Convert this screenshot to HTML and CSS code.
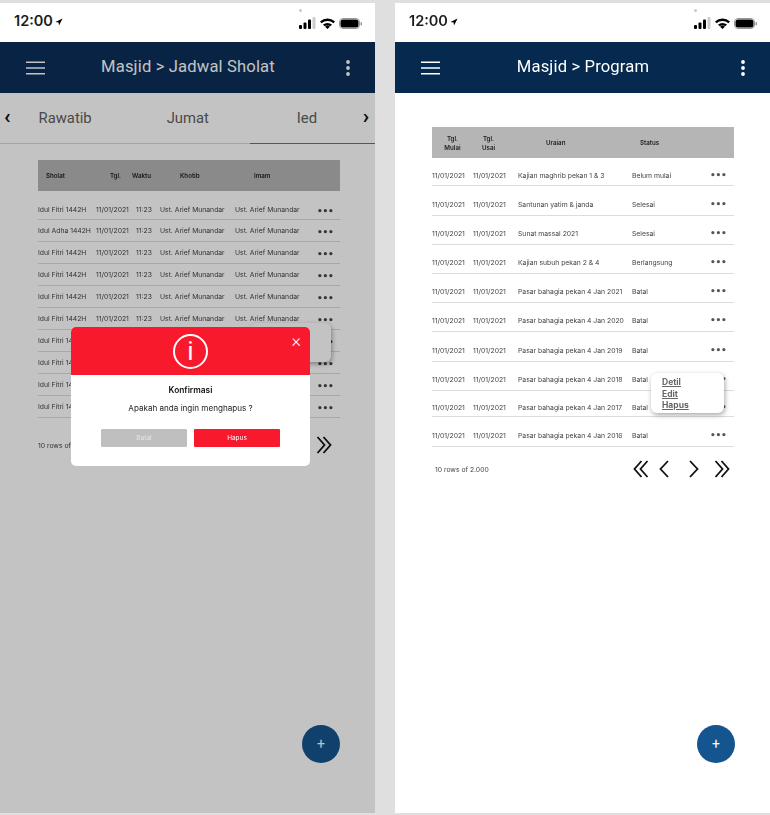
FILE: index.html
```html
<!DOCTYPE html>
<html lang="id">
<head>
    <meta charset="UTF-8">
    <title>Masjid</title>
    <link rel="stylesheet" href="styles.css">
</head>
<body>

    <svg class="defs" width="0" height="0">
        <symbol id="i-first" viewBox="0 0 16 18"><path d="M8.500 1 1.500 9l7 8M14.500 1 7.500 9l7 8" fill="none" stroke="currentColor" stroke-width="1.800"/></symbol>
        <symbol id="i-prev" viewBox="0 0 10 18"><path d="M9 1 1.500 9 9 17" fill="none" stroke="currentColor" stroke-width="1.800"/></symbol>
        <symbol id="i-next" viewBox="0 0 10 18"><path d="M1 1l7.500 8L1 17" fill="none" stroke="currentColor" stroke-width="1.800"/></symbol>
        <symbol id="i-last" viewBox="0 0 16 18"><path d="M1.500 1l7 8-7 8M7.500 1l7 8-7 8" fill="none" stroke="currentColor" stroke-width="1.800"/></symbol>
        <symbol id="i-status" viewBox="0 0 64 14">
            <rect x="0" y="9" width="3" height="4" rx="1"/><rect x="4.500" y="6.500" width="3" height="6.500" rx="1"/><rect x="9" y="3.500" width="3" height="9.500" rx="1"/><rect x="13.500" y="1" width="3" height="12" rx="1" fill="#ccc"/>
            <path d="M21 5.500a11 11 0 0 1 15 0l-1.600 1.700a8.700 8.700 0 0 0-11.800 0zM24 8.600a6.800 6.800 0 0 1 9 0l-1.700 1.700a4.400 4.400 0 0 0-5.600 0zM28.500 13l-2.400-2.300a3.400 3.400 0 0 1 4.800 0z"/>
            <rect x="40.500" y="2.500" width="20" height="10" rx="3.500" stroke="#999" fill="none"/><rect x="41.500" y="3.500" width="18" height="8" rx="2.500"/><rect x="61.500" y="6" width="1.500" height="3.500" rx=".7" fill="#999"/>
        </symbol>
        <symbol id="i-loc" viewBox="0 0 10 10"><path d="M9.500 .5 .5 5l4 .6L5 9.500z"/></symbol>
        <symbol id="i-menu" viewBox="0 0 20 14"><path d="M0 1h20M0 7h20M0 13h20" stroke="currentColor" stroke-width="1.500"/></symbol>
        <symbol id="i-more" viewBox="0 0 4 16"><circle cx="2" cy="2" r="1.900"/><circle cx="2" cy="8" r="1.900"/><circle cx="2" cy="14" r="1.900"/></symbol>
    </svg>

    <div class="page">

        <!-- jadwal sholat -->
        <section class="phone">
            <div class="status">
                <span class="clock">12:00<svg class="loc"><use href="#i-loc"/></svg></span>
                <svg class="status-icons"><use href="#i-status"/></svg>
            </div>
            <span class="cam-dot"></span>
            <header class="appbar appbar-dim">
                <svg class="burger"><use href="#i-menu"/></svg>
                <h1 class="appbar-title">Masjid &gt; Jadwal Sholat</h1>
                <svg class="more"><use href="#i-more"/></svg>
            </header>
            <nav class="tabs">
                <span class="tab-arrow">&#x2039;</span>
                <span class="tab tab-rawatib">Rawatib</span>
                <span class="tab tab-jumat">Jumat</span>
                <span class="tab tab-ied">Ied</span>
                <span class="tab-arrow tab-arrow-right">&#x203A;</span>
            </nav>
            <div class="sholat">
                <div class="thead sholat-row">
                    <span class="h-sholat">Sholat</span><span class="h-tgl">Tgl.</span><span class="h-waktu">Waktu</span><span class="h-khotib">Khotib</span><span class="h-imam">Imam</span><span></span>
                </div>
                <div class="row sholat-row"><span>Idul Fitri 1442H</span><span>11/01/2021</span><span>11:23</span><span>Ust. Arief Munandar</span><span>Ust. Arief Munandar</span><b class="dots">&bull;&bull;&bull;</b></div>
                <div class="row sholat-row"><span>Idul Adha 1442H</span><span>11/01/2021</span><span>11:23</span><span>Ust. Arief Munandar</span><span>Ust. Arief Munandar</span><b class="dots">&bull;&bull;&bull;</b></div>
                <div class="row sholat-row"><span>Idul Fitri 1442H</span><span>11/01/2021</span><span>11:23</span><span>Ust. Arief Munandar</span><span>Ust. Arief Munandar</span><b class="dots">&bull;&bull;&bull;</b></div>
                <div class="row sholat-row"><span>Idul Fitri 1442H</span><span>11/01/2021</span><span>11:23</span><span>Ust. Arief Munandar</span><span>Ust. Arief Munandar</span><b class="dots">&bull;&bull;&bull;</b></div>
                <div class="row sholat-row"><span>Idul Fitri 1442H</span><span>11/01/2021</span><span>11:23</span><span>Ust. Arief Munandar</span><span>Ust. Arief Munandar</span><b class="dots">&bull;&bull;&bull;</b></div>
                <div class="row sholat-row"><span>Idul Fitri 1442H</span><span>11/01/2021</span><span>11:23</span><span>Ust. Arief Munandar</span><span>Ust. Arief Munandar</span><b class="dots">&bull;&bull;&bull;</b></div>
                <div class="row sholat-row"><span>Idul Fitri 1442H</span><span>11/01/2021</span><span>11:23</span><span>Ust. Arief Munandar</span><span>Ust. Arief Munandar</span><b class="dots">&bull;&bull;&bull;</b></div>
                <div class="row sholat-row"><span>Idul Fitri 1442H</span><span>11/01/2021</span><span>11:23</span><span>Ust. Arief Munandar</span><span>Ust. Arief Munandar</span><b class="dots">&bull;&bull;&bull;</b></div>
                <div class="row sholat-row"><span>Idul Fitri 1442H</span><span>11/01/2021</span><span>11:23</span><span>Ust. Arief Munandar</span><span>Ust. Arief Munandar</span><b class="dots">&bull;&bull;&bull;</b></div>
                <div class="row sholat-row"><span>Idul Fitri 1442H</span><span>11/01/2021</span><span>11:23</span><span>Ust. Arief Munandar</span><span>Ust. Arief Munandar</span><b class="dots">&bull;&bull;&bull;</b></div>
                <div class="tfoot">
                    <span>10 rows of 2.000</span>
                    <div class="pager">
                        <svg class="pg-wide"><use href="#i-first"/></svg>
                        <svg class="pg-thin"><use href="#i-prev"/></svg>
                        <svg class="pg-thin"><use href="#i-next"/></svg>
                        <svg class="pg-wide"><use href="#i-last"/></svg>
                    </div>
                </div>
            </div>
            <div class="popup popup-sholat"></div>
            <button class="fab">+</button>

            <div class="overlay"></div>
            <div class="modal">
                <div class="modal-top">
                    <span class="modal-info">i</span>
                    <span class="modal-close">&times;</span>
                </div>
                <div class="modal-title">Konfirmasi</div>
                <div class="modal-text">Apakah anda ingin menghapus ?</div>
                <div class="modal-actions">
                    <button class="btn btn-cancel">Batal</button>
                    <button class="btn btn-delete">Hapus</button>
                </div>
            </div>
        </section>

        <!-- program -->
        <section class="phone">
            <div class="status">
                <span class="clock">12:00<svg class="loc"><use href="#i-loc"/></svg></span>
                <svg class="status-icons"><use href="#i-status"/></svg>
            </div>
            <span class="cam-dot"></span>
            <header class="appbar">
                <svg class="burger"><use href="#i-menu"/></svg>
                <h1 class="appbar-title">Masjid &gt; Program</h1>
                <svg class="more"><use href="#i-more"/></svg>
            </header>
            <div class="program">
                <div class="thead program-row">
                    <span class="h-center">Tgl.<br>Mulai</span><span class="h-center h-usai">Tgl.<br>Usai</span><span class="h-uraian">Uraian</span><span class="h-status">Status</span><span></span>
                </div>
                <div class="row program-row"><span>11/01/2021</span><span>11/01/2021</span><span>Kajian maghrib pekan 1 &amp; 3</span><span>Belum mulai</span><b class="dots">&bull;&bull;&bull;</b></div>
                <div class="row program-row"><span>11/01/2021</span><span>11/01/2021</span><span>Santunan yatim &amp; janda</span><span>Selesai</span><b class="dots">&bull;&bull;&bull;</b></div>
                <div class="row program-row"><span>11/01/2021</span><span>11/01/2021</span><span>Sunat massal 2021</span><span>Selesai</span><b class="dots">&bull;&bull;&bull;</b></div>
                <div class="row program-row"><span>11/01/2021</span><span>11/01/2021</span><span>Kajian subuh pekan 2 &amp; 4</span><span>Berlangsung</span><b class="dots">&bull;&bull;&bull;</b></div>
                <div class="row program-row"><span>11/01/2021</span><span>11/01/2021</span><span>Pasar bahagia pekan 4 Jan 2021</span><span>Batal</span><b class="dots">&bull;&bull;&bull;</b></div>
                <div class="row program-row"><span>11/01/2021</span><span>11/01/2021</span><span>Pasar bahagia pekan 4 Jan 2020</span><span>Batal</span><b class="dots">&bull;&bull;&bull;</b></div>
                <div class="row program-row"><span>11/01/2021</span><span>11/01/2021</span><span>Pasar bahagia pekan 4 Jan 2019</span><span>Batal</span><b class="dots">&bull;&bull;&bull;</b></div>
                <div class="row program-row"><span>11/01/2021</span><span>11/01/2021</span><span>Pasar bahagia pekan 4 Jan 2018</span><span>Batal</span><b class="dots">&bull;&bull;&bull;</b></div>
                <div class="row program-row"><span>11/01/2021</span><span>11/01/2021</span><span>Pasar bahagia pekan 4 Jan 2017</span><span>Batal</span><b class="dots">&bull;&bull;&bull;</b></div>
                <div class="row program-row"><span>11/01/2021</span><span>11/01/2021</span><span>Pasar bahagia pekan 4 Jan 2016</span><span>Batal</span><b class="dots">&bull;&bull;&bull;</b></div>
                <div class="tfoot">
                    <span>10 rows of 2.000</span>
                    <div class="pager">
                        <svg class="pg-wide"><use href="#i-first"/></svg>
                        <svg class="pg-thin"><use href="#i-prev"/></svg>
                        <svg class="pg-thin"><use href="#i-next"/></svg>
                        <svg class="pg-wide"><use href="#i-last"/></svg>
                    </div>
                </div>
            </div>
            <div class="popup popup-program">
                <a>Detil</a>
                <a>Edit</a>
                <a>Hapus</a>
            </div>
            <button class="fab">+</button>
        </section>

    </div>

</body>
</html>
```

FILE: styles.css
```css
* {
    box-sizing: border-box;
}
body {
    margin: 0;
    background-color: #dfdfdf;
    font-family: "Inter", sans-serif;
    overflow: hidden;
}
.defs {
    position: absolute;
}
.page {
    display: flex;
    gap: 20px;
    padding-top: 3px;
    filter: blur(.3px);
}
.phone {
    position: relative;
    width: 375px;
    height: 810px;
    background-color: #fff;
    overflow: hidden;
}

/* status bar */
.status {
    height: 39px;
    display: flex;
    align-items: center;
    justify-content: space-between;
    padding: 0 12px 4px 14px;
}
.clock {
    font-size: 14.500px;
    font-weight: 600;
    color: #1c1c1c;
    display: flex;
    align-items: center;
    gap: 2px;
}
.loc {
    width: 8px;
    height: 8px;
    margin-top: 3px;
}
.status-icons {
    width: 64px;
    height: 14px;
    margin-top: 4px;
}
.cam-dot {
    position: absolute;
    left: 299px;
    top: 6px;
    width: 3px;
    height: 3px;
    border-radius: 50%;
    background-color: #c8c8c8;
}

/* header */
.appbar {
    height: 51px;
    background-color: #06294f;
    color: #fff;
    display: flex;
    align-items: center;
    padding: 0 25px 0 26px;
}
.appbar-dim {
    background-color: #0b2f5a;
}
.appbar-title {
    flex: 1;
    margin: 0 0 2px;
    text-align: center;
    font-family: "Roboto", sans-serif;
    font-size: 16.600px;
    font-weight: 400;
    letter-spacing: .15px;
}
.burger {
    width: 19px;
    height: 14px;
}
.more {
    width: 4px;
    height: 16px;
    margin-left: 15px;
    fill: #fff;
}

/* tabs */
.tabs {
    position: relative;
    height: 51px;
    display: flex;
    align-items: center;
    padding: 0 6px 0 4px;
    border-bottom: 1px solid #d8d8d8;
    font-family: "Roboto", sans-serif;
    font-size: 14.800px;
    color: #5f5f5f;
}
.tab-arrow {
    font-size: 21px;
    font-weight: 700;
    color: #111;
    line-height: 1;
    padding-bottom: 4px;
}
.tab-arrow-right {
    margin-left: auto;
}
.tab-rawatib {
    margin-left: 28px;
}
.tab-jumat {
    margin-left: 75px;
}
.tab-ied {
    margin-left: 88px;
}
.tab-ied::after {
    content: "";
    position: absolute;
    right: 0;
    bottom: -1px;
    width: 125px;
    height: 1px;
    background-color: #5a6ccc;
}

/* tables */
.sholat {
    margin: 16px 35px 0 38px;
    transform: translateZ(0);
}
.program {
    margin: 34px 36px 0 37px;
    transform: translateZ(0);
}
.thead {
    height: 31px;
    background-color: #b5b5b5;
    font-size: 6.200px;
    font-weight: 600;
    color: #222;
    align-items: center;
}
.row {
    font-size: 6.800px;
    color: #444;
    border-bottom: 1px solid #dcdcdc;
    align-items: center;
    white-space: nowrap;
}
.sholat-row,
.program-row {
    display: grid;
}
.sholat-row {
    grid-template-columns: 58px 40px 24px 75px 82px 23px;
}
.sholat .row {
    height: 22px;
}
.sholat .row:nth-child(2) {
    height: 29px;
    padding-top: 8px;
}
.program-row {
    grid-template-columns: 41px 45px 114px 78px 24px;
}
.program .row {
    height: 29px;
    padding-top: 7px;
}
.program .row:nth-child(2) {
    height: 28px;
}
.program .row:nth-child(3),
.program .row:nth-child(8),
.program .row:nth-child(11) {
    height: 30px;
}
.program .row:nth-child(10) {
    height: 26px;
}
.h-sholat {
    padding-left: 8px;
}
.h-tgl {
    padding-left: 14px;
}
.h-waktu {
    margin-left: -4px;
}
.h-khotib {
    padding-left: 20px;
}
.h-imam {
    padding-left: 19px;
}
.h-center {
    text-align: center;
    line-height: 9px;
}
.h-usai {
    padding-right: 14px;
}
.h-uraian {
    padding-left: 28px;
}
.h-status {
    padding-left: 8px;
}
.dots {
    font-size: 9px;
    letter-spacing: -.3px;
    color: #555;
    font-family: "DejaVu Sans", sans-serif;
    line-height: 1;
}
.sholat .dots {
    padding-top: 4px;
    color: #444;
}
.tfoot {
    display: flex;
    align-items: center;
    justify-content: space-between;
    height: 44px;
    padding: 0 4px 0 3px;
    font-size: 6.800px;
    color: #444;
}
.sholat .tfoot {
    height: 54px;
    padding-left: 0;
    padding-right: 8px;
}
.pager {
    display: flex;
    align-items: center;
    gap: 10px;
    color: #111;
}
.pg-wide {
    width: 16px;
    height: 18px;
}
.pg-thin {
    width: 10px;
    height: 18px;
}
.pg-thin + .pg-thin {
    margin: 0 5px 0 10px;
}

/* popup menu */
.popup {
    position: absolute;
    background-color: #fff;
    border-radius: 6px;
    box-shadow: 1px 2px 5px rgba(0, 0, 0, .35);
}
.popup-sholat {
    left: 250px;
    top: 320px;
    width: 81px;
    height: 39px;
}
.popup-program {
    left: 256px;
    top: 370px;
    width: 73px;
    height: 40px;
    padding: 4px 11px;
    display: flex;
    flex-direction: column;
    font-size: 8.500px;
    font-weight: 700;
    color: #666;
    line-height: 11.500px;
}
.popup-program a {
    text-decoration: underline;
}

/* fab */
.fab {
    position: absolute;
    right: 35px;
    top: 722px;
    width: 38px;
    height: 38px;
    border: none;
    border-radius: 50%;
    background-color: #15558f;
    color: #fff;
    font-size: 14px;
    font-family: "Roboto", sans-serif;
    padding: 0;
}

/* dialog */
.overlay {
    position: absolute;
    left: 0;
    right: 0;
    top: 39px;
    bottom: 0;
    background-color: rgba(0, 0, 0, .235);
}
.modal {
    position: absolute;
    left: 71px;
    top: 324px;
    width: 239px;
    height: 139px;
    background-color: #fff;
    border-radius: 5px;
    overflow: hidden;
    text-align: center;
}
.modal-top {
    position: relative;
    height: 48px;
    background-color: #f8192c;
    display: flex;
    align-items: center;
    justify-content: center;
}
.modal-info {
    width: 35px;
    height: 35px;
    border: 2px solid #fff;
    border-radius: 50%;
    color: #fff;
    font-family: "Roboto", sans-serif;
    font-size: 26px;
    font-weight: 400;
    line-height: 30px;
}
.modal-close {
    position: absolute;
    right: 9px;
    top: 3px;
    color: #fff;
    font-family: "Roboto", sans-serif;
    font-size: 18px;
    font-weight: 300;
}
.modal-title {
    margin-top: 10px;
    font-size: 8.400px;
    line-height: 11px;
    font-weight: 600;
    color: #111;
}
.modal-text {
    margin-top: 6px;
    font-size: 8.100px;
    line-height: 12px;
    color: #222;
}
.modal-actions {
    display: flex;
    justify-content: center;
    gap: 7px;
    margin-top: 15px;
}
.btn {
    width: 86px;
    height: 18px;
    border: none;
    border-radius: 1px;
    font-family: "Inter", sans-serif;
    font-size: 6.500px;
    color: #fff;
    padding: 0;
}
.btn-cancel {
    background-color: #bfbfbf;
    color: #e4e4e4;
}
.btn-delete {
    background-color: #f8192c;
}
```
